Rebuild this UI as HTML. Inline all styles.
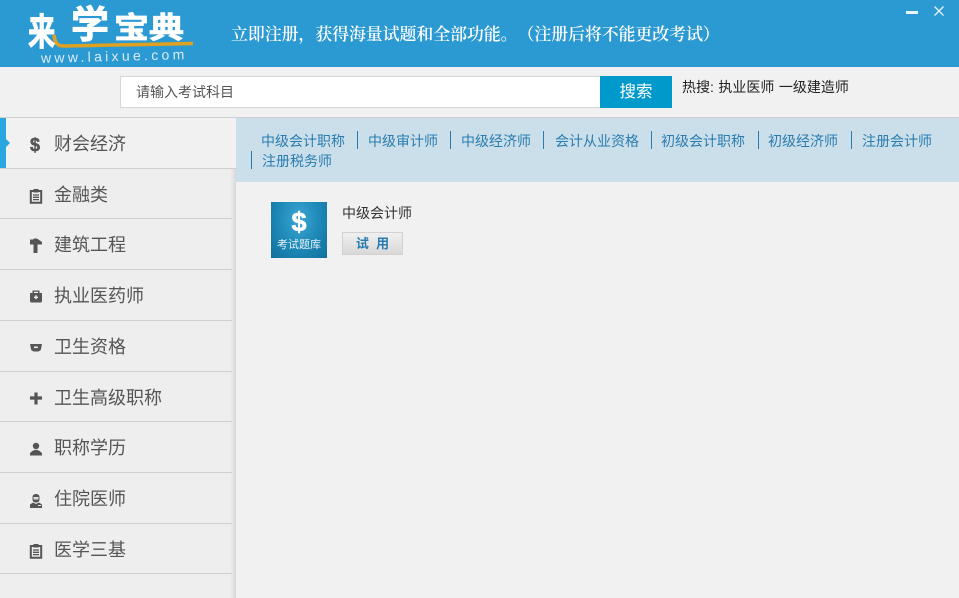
<!DOCTYPE html>
<html lang="zh">
<head>
<meta charset="utf-8">
<title>来学宝典</title>
<style>
html,body{margin:0;padding:0;width:959px;height:598px;overflow:hidden;background:#f1f1f1;}
body{position:relative;font-family:"Liberation Sans","Noto Sans CJK SC",sans-serif;text-spacing-trim:space-all;}
.a{position:absolute;white-space:nowrap;}
#top{left:0;top:0;width:959px;height:67px;background:#2b99d2;}
.lg{color:#fff;font-weight:700;font-family:"Noto Sans CJK SC",sans-serif;line-height:1;transform-origin:left top;-webkit-text-stroke:.9px #fff;}
.sep{left:0;width:232px;height:1px;background:#cfcfcf;}
.nm{left:54px;font-size:18px;line-height:24px;color:#555;}
.ic{left:28px;width:16px;height:16px;}
.ln{top:132px;font-size:14px;line-height:18px;color:#2a7cb0;}
.bar{width:1px;height:18px;background:#2a7cb0;}
</style>
</head>
<body>
<div class="a" id="top"></div>
<svg class="a" style="left:50px;top:30px;" width="145" height="22" viewBox="0 0 145 22"><path d="M4 5 C5 14 8 16 14 16 L143 13.5" fill="none" stroke="#e0a020" stroke-width="3.6"/></svg>
<div class="a lg" style="left:28px;top:11px;font-size:37px;transform:scaleX(.74);">来</div>
<div class="a lg" style="left:71px;top:3px;font-size:38px;">学</div>
<div class="a lg" style="left:114px;top:11px;font-size:35px;transform:scaleY(.84);">宝</div>
<div class="a lg" style="left:149px;top:11px;font-size:35px;transform:scaleY(.84);">典</div>
<div class="a" style="left:41px;top:48px;font-size:14px;line-height:16px;letter-spacing:3.3px;color:#dcecf6;transform:rotate(-1.5deg);">www.laixue.com</div>
<div class="a" style="left:231px;top:21px;font-size:17px;line-height:24px;font-weight:600;letter-spacing:-.15px;color:#fff;font-family:'Noto Serif CJK SC',serif;">立即注册，获得海量试题和全部功能。（注册后将不能更改考试）</div>
<div class="a" style="left:906px;top:11px;width:12px;height:3px;background:#e8f3fa;"></div>
<svg class="a" style="left:933px;top:5px;" width="12" height="12" viewBox="0 0 12 12"><path d="M1.5 1.5 L10.5 10.5 M10.5 1.5 L1.5 10.5" stroke="#e8f3fa" stroke-width="1.3"/></svg>

<div class="a" style="left:120px;top:76px;width:479px;height:30px;background:#fff;border:1px solid #d6d6d6;"></div>
<div class="a" style="left:136px;top:83px;font-size:14px;line-height:19px;color:#555;">请输入考试科目</div>
<div class="a" style="left:600px;top:76px;width:72px;height:32px;background:#0099cc;color:#fff;font-size:16.5px;line-height:33px;text-align:center;">搜索</div>
<div class="a" style="left:682px;top:78px;font-size:14px;line-height:19px;word-spacing:.6px;color:#222;">热搜: 执业医师 一级建造师</div>

<div class="a" style="left:0;top:117px;width:959px;height:1px;background:#d0d0d0;"></div>
<div class="a" style="left:0;top:169px;width:236px;height:429px;background:linear-gradient(90deg,#eeeeee 0,#eeeeee 230px,#e4e4e4 233px,#d6d6d6 236px);"></div>
<div class="a" style="left:236px;top:118px;width:723px;height:64px;background:#cbdfea;"></div>
<svg class="a" style="left:0;top:118px;" width="10" height="50"><path d="M0 0H6V21L10 25L6 29V50H0Z" fill="#27a6e0"/></svg>

<div class="a sep" style="top:168px;width:236px;"></div>
<div class="a sep" style="top:218px;"></div>
<div class="a sep" style="top:269px;"></div>
<div class="a sep" style="top:320px;"></div>
<div class="a sep" style="top:371px;"></div>
<div class="a sep" style="top:421px;"></div>
<div class="a sep" style="top:472px;"></div>
<div class="a sep" style="top:523px;"></div>
<div class="a sep" style="top:573px;"></div>

<div class="a nm" style="top:132px;">财会经济</div>
<div class="a nm" style="top:183px;">金融类</div>
<div class="a nm" style="top:233px;">建筑工程</div>
<div class="a nm" style="top:284px;">执业医药师</div>
<div class="a nm" style="top:335px;">卫生资格</div>
<div class="a nm" style="top:386px;">卫生高级职称</div>
<div class="a nm" style="top:436px;">职称学历</div>
<div class="a nm" style="top:487px;">住院医师</div>
<div class="a nm" style="top:538px;">医学三基</div>

<div class="a" style="left:30px;top:135px;font-size:18px;line-height:20px;font-weight:bold;color:#555;-webkit-text-stroke:.5px #555;">$</div>
<svg class="a ic" style="top:188px;" viewBox="0 0 16 16"><path d="M2.8 3H13.2V14.7H2.8Z" fill="none" stroke="#555" stroke-width="2"/><path d="M5.5 1H10.5V4.5H5.5Z" fill="#555"/><path d="M5 7H11M5 9.3H11M5 11.6H11" stroke="#555" stroke-width="1.3"/></svg>
<svg class="a ic" style="top:237px;" viewBox="0 0 16 16"><path d="M2 2.5H5L6 1.5H9L14 5V7.5H9.5V16H5.5V7.5H2Z" fill="#555"/></svg>
<svg class="a ic" style="top:289px;" viewBox="0 0 16 16"><path d="M4.5 4V1.5H11.5V4H14V12.5L13 13.5H3L2 12.5V4Z" fill="#555"/><rect x="6" y="2.8" width="4" height="1.2" fill="#eee"/><path d="M6 8.3H10M8 6.3V10.3" stroke="#eee" stroke-width="1.4"/></svg>
<svg class="a ic" style="top:340px;" viewBox="0 0 16 16"><path d="M2 4H14L12.8 10L10.5 11.5H5.5L3.2 10Z" fill="#555"/><rect x="6" y="6.5" width="3.8" height="1.6" fill="#eee"/></svg>
<svg class="a ic" style="top:390px;" viewBox="0 0 16 16"><path d="M6.4 2.5H9.6V6.4H14V9.6H9.6V14.5H6.4V9.6H2V6.4H6.4Z" fill="#555"/></svg>
<svg class="a ic" style="top:441px;" viewBox="0 0 16 16"><circle cx="8" cy="5" r="3.2" fill="#555"/><path d="M2 14.5V12.5C3 10.5 5 9.8 6.5 9H9.5C11 9.8 13 10.5 14 12.5V14.5Z" fill="#555"/></svg>
<svg class="a ic" style="top:492px;" viewBox="0 0 16 16"><path d="M4.5 5C4.5 1 11.5 1 11.5 5V8C11 10 9.5 10.5 8 10.5C6.5 10.5 5 10 4.5 8Z" fill="#555"/><rect x="5.5" y="5" width="5" height="2.5" fill="#ddd"/><path d="M2 16V12.5L5 10.5L8 12L11 10.5L14 12.5V16Z" fill="#555"/><rect x="10" y="13" width="3" height="1" fill="#eee"/></svg>
<svg class="a ic" style="top:543px;" viewBox="0 0 16 16"><path d="M2.8 3H13.2V14.7H2.8Z" fill="none" stroke="#555" stroke-width="2"/><path d="M5.5 1H10.5V4.5H5.5Z" fill="#555"/><path d="M5 7H11M5 9.3H11M5 11.6H11" stroke="#555" stroke-width="1.3"/></svg>

<div class="a ln" style="left:261px;">中级会计职称</div>
<div class="a bar" style="left:357px;top:131px;"></div>
<div class="a ln" style="left:368px;">中级审计师</div>
<div class="a bar" style="left:450px;top:131px;"></div>
<div class="a ln" style="left:461px;">中级经济师</div>
<div class="a bar" style="left:543px;top:131px;"></div>
<div class="a ln" style="left:555px;">会计从业资格</div>
<div class="a bar" style="left:651px;top:131px;"></div>
<div class="a ln" style="left:661px;">初级会计职称</div>
<div class="a bar" style="left:758px;top:131px;"></div>
<div class="a ln" style="left:768px;">初级经济师</div>
<div class="a bar" style="left:851px;top:131px;"></div>
<div class="a ln" style="left:862px;">注册会计师</div>
<div class="a bar" style="left:251px;top:151px;"></div>
<div class="a ln" style="left:262px;top:152px;">注册税务师</div>

<div class="a" style="left:271px;top:202px;width:56px;height:56px;background:radial-gradient(ellipse at 50% 30%,#3ba7d4 0,#1f8ab8 50%,#0f6f9c 100%);"></div>
<div class="a" style="left:271px;top:206px;width:56px;text-align:center;font-size:27px;line-height:32px;font-weight:bold;color:#fff;-webkit-text-stroke:.6px #fff;">$</div>
<div class="a" style="left:271px;top:237px;width:56px;text-align:center;font-size:11px;line-height:16px;color:#e6f3f9;">考试题库</div>
<div class="a" style="left:342px;top:203px;font-size:14px;line-height:20px;color:#333;">中级会计师</div>
<div class="a" style="left:342px;top:232px;width:59px;height:21px;border:1px solid #d2d2d2;background:linear-gradient(180deg,#f0f0f0,#d8d8d8);color:#2a7cb0;font-size:13px;font-weight:bold;line-height:21px;text-align:center;">试&nbsp;&nbsp;用</div>
</body>
</html>
